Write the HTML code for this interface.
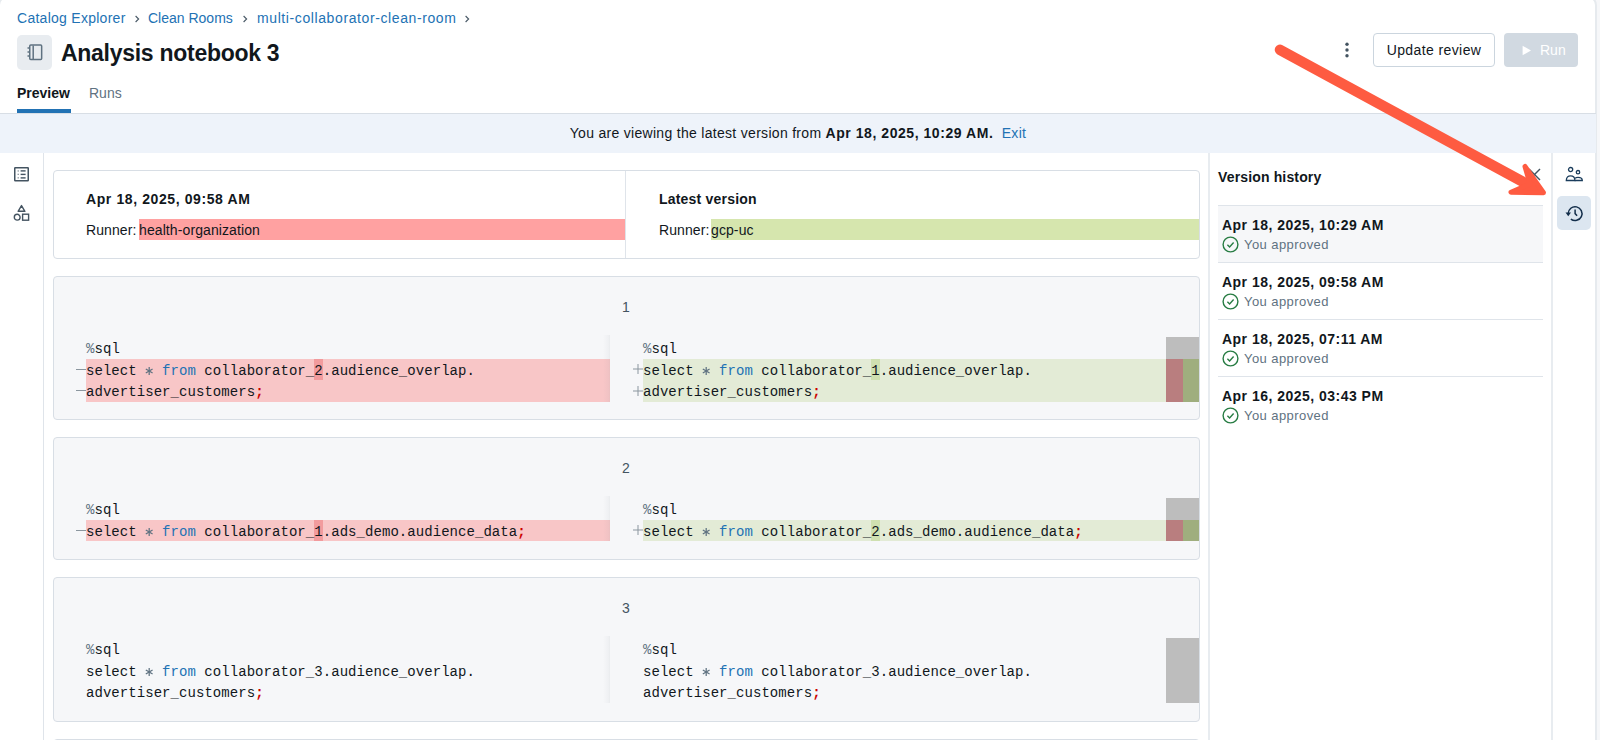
<!DOCTYPE html>
<html><head><meta charset="utf-8">
<style>
*{box-sizing:border-box;margin:0;padding:0}
html,body{width:1600px;height:740px;overflow:hidden;background:#f6f7f9}
body{position:relative;font-family:"Liberation Sans",sans-serif;color:#11171c;font-size:14px}
.abs{position:absolute}
.mono{font-family:"Liberation Mono",monospace}
/* outer right strip */
#rstrip{left:-2px;top:-4px;width:1599px;height:760px;background:#fff;border:2px solid #e6eaee;border-radius:9px}
/* breadcrumb */
.bc{top:10px;height:16px;line-height:16px;color:#2272b4;font-size:14px;white-space:nowrap}
.chev{top:15px;width:8px;height:8px}
#title{left:61px;top:39px;font-size:23px;font-weight:bold;line-height:28px;white-space:nowrap;letter-spacing:-0.28px}
#nbicon{left:17px;top:35px;width:34.5px;height:34.5px;background:#e8ecf0;border-radius:5px}
.tab{top:85px;font-size:14px;line-height:16px}
#tabline{left:17px;top:109px;width:54px;height:4px;background:#2272b4}
#hline{left:0;top:113px;width:1596px;height:1px;background:#d8dee5}
#banner{left:0;top:114px;width:1596px;height:39px;background:#eef3fa}
#bannertxt{left:0;top:125px;width:1596px;text-align:center;line-height:16px;font-size:14px;letter-spacing:0.3px}
#bannertxt b{letter-spacing:0.55px}
#leftbar{left:43px;top:153px;width:1px;height:587px;background:#dfe4ea}
#mainr{left:1208px;top:153px;width:2px;height:587px;background:#e8ecf0}
#panelr{left:1551px;top:153px;width:2px;height:587px;background:#e8ecf0}
.btn{top:33px;height:34px;border-radius:4px;line-height:33px;font-size:14px;white-space:nowrap}
#upd{left:1373px;width:122px;border:1px solid #cbd5de;text-align:center;color:#11171c;letter-spacing:0.4px}
#run{left:1504px;width:74px;background:#d1d9e1;color:#fff}
/* diff header */
#hdr{left:53px;top:170px;width:1147px;height:89px;border:1px solid #d8dee5;border-radius:4px;background:#fff}
#hdrdiv{left:625px;top:171px;width:1px;height:87px;background:#dfe4ea}
.hdate{font-weight:bold;font-size:14px;line-height:16px;white-space:nowrap;letter-spacing:0.6px}
.runner{font-size:14px;line-height:21px;height:21px;padding-top:1px;white-space:nowrap;letter-spacing:0.1px}
.cell{left:53px;width:1147px;border:1px solid #d8dee5;border-radius:4px;background:#f6f7f9}
.num{font-size:14px;color:#445461;line-height:16px}
.code{font-family:"Liberation Mono",monospace;font-size:14px;line-height:21.5px;white-space:pre;color:#11171c;padding-top:2px;letter-spacing:0.055px}
.ast{display:inline-block;vertical-align:-1px}
.kw{color:#2272b4}
.pct{color:#5f7281}
.semi{color:#cc0000;font-weight:bold}
.delbg{background:#f8c6c7}
.addbg{background:#e3ebd6}
.delch{background:#f29b9d}
.addch{background:#cfe0b0}
.gut{color:#8b969f}
.mm-g{background:#bdbdbd}
.mm-r{background:#b97e7f}
.mm-a{background:#9fae7e}
/* version history */
#vhtitle{left:1218px;top:169px;font-weight:bold;font-size:14px;line-height:16px;letter-spacing:0.15px}
.vitem{left:1218px;width:325px;height:57px;border-bottom:1px solid #dfe4ea}
.vdate{left:4px;top:11px;font-weight:bold;font-size:14px;line-height:16px;white-space:nowrap;letter-spacing:0.48px}
.vsub{left:26px;top:31px;color:#5f7281;font-size:13px;line-height:16px;white-space:nowrap;letter-spacing:0.43px}
.vchk{left:4px;top:30px;width:17px;height:17px}
#hist{left:1557px;top:196px;width:34px;height:34px;background:#dce6f0;border-radius:5px}
</style></head><body>
<div id="rstrip" class="abs"></div>

<!-- breadcrumb -->
<div class="abs bc" style="left:17px;letter-spacing:0.27px">Catalog Explorer</div>
<svg class="abs chev" style="left:133px" viewBox="0 0 8 8"><path d="M2.6 1 L5.6 4 L2.6 7" fill="none" stroke="#4a5a67" stroke-width="1.15"/></svg>
<div class="abs bc" style="left:148px">Clean Rooms</div>
<svg class="abs chev" style="left:241px" viewBox="0 0 8 8"><path d="M2.6 1 L5.6 4 L2.6 7" fill="none" stroke="#4a5a67" stroke-width="1.15"/></svg>
<div class="abs bc" style="left:257px;letter-spacing:0.6px">multi-collaborator-clean-room</div>
<svg class="abs chev" style="left:463px" viewBox="0 0 8 8"><path d="M2.6 1 L5.6 4 L2.6 7" fill="none" stroke="#4a5a67" stroke-width="1.15"/></svg>

<!-- title -->
<div id="nbicon" class="abs">
<svg class="abs" style="left:0;top:0" width="35" height="35" viewBox="0 0 35 35">
<g fill="none" stroke="#5f7281" stroke-width="1.5">
<rect x="29.5" y="10" width="0" height="0"/>
<rect x="12.75" y="10.1" width="11.9" height="14.3" rx="1"/>
<line x1="16.2" y1="10.4" x2="16.2" y2="24.2"/>
<line x1="10.5" y1="13" x2="12.75" y2="13"/>
<line x1="10.5" y1="17" x2="12.75" y2="17"/>
<line x1="10.5" y1="21" x2="12.75" y2="21"/>
</g></svg>
</div>
<div id="title" class="abs">Analysis notebook 3</div>

<!-- kebab & buttons -->
<svg class="abs" style="left:1343px;top:40.8px" width="8" height="18" viewBox="0 0 8 18"><g fill="#445461"><circle cx="4" cy="3.3" r="1.7"/><circle cx="4" cy="9" r="1.7"/><circle cx="4" cy="14.7" r="1.7"/></g></svg>
<div id="upd" class="abs btn">Update review</div>
<div id="run" class="abs btn">
<svg class="abs" style="left:18px;top:12px" width="10" height="11" viewBox="0 0 10 11"><path d="M0.6 0.8 L9 5.5 L0.6 10.2Z" fill="#fff"/></svg>
<span class="abs" style="left:36px;top:1px">Run</span>
</div>

<!-- tabs -->
<div class="abs tab" style="left:17px;font-weight:bold">Preview</div>
<div class="abs tab" style="left:89px;color:#5f7281">Runs</div>
<div id="tabline" class="abs"></div>
<div id="hline" class="abs"></div>

<!-- banner -->
<div id="banner" class="abs"></div>
<div id="bannertxt" class="abs">You are viewing the latest version from <b>Apr 18, 2025, 10:29 AM.</b>&nbsp; <span style="color:#2272b4">Exit</span></div>

<!-- sidebars -->
<div id="leftbar" class="abs"></div>
<div id="mainr" class="abs"></div>
<div id="panelr" class="abs"></div>

<!-- left icons -->
<svg class="abs" style="left:13px;top:166px" width="17" height="17" viewBox="0 0 17 17">
<g fill="none" stroke="#445461" stroke-width="1.5"><rect x="1.75" y="1.75" width="13.5" height="13" rx="0.5"/></g>
<g fill="#445461"><rect x="4.6" y="4.3" width="1.2" height="1.3" opacity="0.7"/><rect x="4.6" y="7.7" width="1.2" height="1.3" opacity="0.7"/><rect x="4.6" y="11.2" width="1.2" height="1.3" opacity="0.7"/>
<rect x="7.6" y="4.2" width="5" height="1.4"/><rect x="7.6" y="7.7" width="5" height="1.4"/><rect x="7.6" y="11.2" width="5" height="1.4"/></g>
</svg>
<svg class="abs" style="left:13px;top:204px" width="17" height="18" viewBox="0 0 17 18">
<g fill="none" stroke="#445461" stroke-width="1.4">
<path d="M8.5 1.6 L11.9 7.3 L5.1 7.3 Z" stroke-linejoin="round"/>
<circle cx="4.2" cy="13.2" r="2.9"/>
<rect x="9.6" y="10.2" width="6" height="6"/>
</g></svg>

<!-- right icons -->
<svg class="abs" style="left:1564px;top:165px" width="20" height="18" viewBox="0 0 20 18">
<g fill="none" stroke="#1b3d5c" stroke-width="1.3">
<circle cx="6.6" cy="4.6" r="2.1"/>
<circle cx="14" cy="7.2" r="1.7"/>
<path d="M2.3 15.5 C2.3 12.4 4.2 10.8 6.6 10.8 C9 10.8 10.9 12.4 10.9 15.5 Z"/>
<path d="M10.6 15.5 L18.3 15.5 C18.3 13.6 17 12.4 14 12.4 C12.6 12.4 11.6 12.8 11 13.4"/>
</g></svg>
<div id="hist" class="abs">
<svg class="abs" style="left:7px;top:7px" width="20" height="20" viewBox="0 0 20 20">
<g fill="none" stroke="#132e4a" stroke-width="1.5">
<path d="M4.20 10.60 A6.9 6.9 0 1 1 6.85 16.04"/>
<path d="M11.1 6.4 L11.1 10.6 L13.1 12.7"/>
</g>
<path d="M1.5 9.6 L7 9.6 L4.25 13.2 Z" fill="#132e4a"/>
</svg>
</div>

<!-- diff header -->
<div id="hdr" class="abs"></div>
<div id="hdrdiv" class="abs"></div>
<div class="abs hdate" style="left:86px;top:191px">Apr 18, 2025, 09:58 AM</div>
<div class="abs runner" style="left:86px;top:219px">Runner:</div>
<div class="abs runner" style="left:139px;top:219px;width:486px;background:#ffa1a1;padding-left:0">health-organization</div>
<div class="abs hdate" style="left:659px;top:191px;letter-spacing:0.2px">Latest version</div>
<div class="abs runner" style="left:659px;top:219px">Runner:</div>
<div class="abs runner" style="left:711px;top:219px;width:488px;background:#d6e6ae">gcp-uc</div>

<!-- CELLS_PLACEHOLDER -->
<div class="abs cell" style="top:276px;height:144px"></div>
<div class="abs num" style="left:622px;top:299px">1</div>
<div class="abs mm-g" style="left:1166px;top:337.0px;width:33px;height:21.5px"></div>
<div class="abs code" style="left:86px;top:337.0px"><span class="pct">%</span>sql</div>
<div class="abs code" style="left:643px;top:337.0px"><span class="pct">%</span>sql</div>
<div class="abs delbg" style="left:86px;top:358.5px;width:524px;height:21.5px"></div>
<div class="abs addbg" style="left:643px;top:358.5px;width:523px;height:21.5px"></div>
<div class="abs" style="left:76px;top:368.5px;width:10px;height:1px;background:#8b969f"></div>
<svg class="abs" style="left:633px;top:364.0px" width="10" height="10" viewBox="0 0 10 10"><g stroke="#8b969f" stroke-width="1"><line x1="0" y1="5" x2="10" y2="5"/><line x1="5" y1="0" x2="5" y2="10"/></g></svg>
<div class="abs mm-r" style="left:1166px;top:358.5px;width:17px;height:21.5px"></div>
<div class="abs mm-a" style="left:1183px;top:358.5px;width:16px;height:21.5px"></div>
<div class="abs delch" style="left:314.28px;top:358.5px;width:8.46px;height:21.5px"></div>
<div class="abs addch" style="left:871.28px;top:358.5px;width:8.46px;height:21.5px"></div>
<div class="abs code" style="left:86px;top:358.5px">select <svg class="ast" width="8.4" height="10" viewBox="0 0 8.4 10"><g stroke="#5f7281" stroke-width="1.25"><line x1="4.2" y1="1.1" x2="4.2" y2="8.9"/><line x1="0.82" y1="3.05" x2="7.58" y2="6.95"/><line x1="0.82" y1="6.95" x2="7.58" y2="3.05"/></g></svg> <span class="kw">from</span> collaborator_2.audience_overlap.</div>
<div class="abs code" style="left:643px;top:358.5px">select <svg class="ast" width="8.4" height="10" viewBox="0 0 8.4 10"><g stroke="#5f7281" stroke-width="1.25"><line x1="4.2" y1="1.1" x2="4.2" y2="8.9"/><line x1="0.82" y1="3.05" x2="7.58" y2="6.95"/><line x1="0.82" y1="6.95" x2="7.58" y2="3.05"/></g></svg> <span class="kw">from</span> collaborator_1.audience_overlap.</div>
<div class="abs delbg" style="left:86px;top:380.0px;width:524px;height:21.5px"></div>
<div class="abs addbg" style="left:643px;top:380.0px;width:523px;height:21.5px"></div>
<div class="abs" style="left:76px;top:390.0px;width:10px;height:1px;background:#8b969f"></div>
<svg class="abs" style="left:633px;top:385.5px" width="10" height="10" viewBox="0 0 10 10"><g stroke="#8b969f" stroke-width="1"><line x1="0" y1="5" x2="10" y2="5"/><line x1="5" y1="0" x2="5" y2="10"/></g></svg>
<div class="abs mm-r" style="left:1166px;top:380.0px;width:17px;height:21.5px"></div>
<div class="abs mm-a" style="left:1183px;top:380.0px;width:16px;height:21.5px"></div>
<div class="abs code" style="left:86px;top:380.0px">advertiser_customers<span class="semi">;</span></div>
<div class="abs code" style="left:643px;top:380.0px">advertiser_customers<span class="semi">;</span></div>
<div class="abs cell" style="top:437px;height:123px"></div>
<div class="abs num" style="left:622px;top:460px">2</div>
<div class="abs mm-g" style="left:1166px;top:498.0px;width:33px;height:21.5px"></div>
<div class="abs code" style="left:86px;top:498.0px"><span class="pct">%</span>sql</div>
<div class="abs code" style="left:643px;top:498.0px"><span class="pct">%</span>sql</div>
<div class="abs delbg" style="left:86px;top:519.5px;width:524px;height:21.5px"></div>
<div class="abs addbg" style="left:643px;top:519.5px;width:523px;height:21.5px"></div>
<div class="abs" style="left:76px;top:529.5px;width:10px;height:1px;background:#8b969f"></div>
<svg class="abs" style="left:633px;top:525.0px" width="10" height="10" viewBox="0 0 10 10"><g stroke="#8b969f" stroke-width="1"><line x1="0" y1="5" x2="10" y2="5"/><line x1="5" y1="0" x2="5" y2="10"/></g></svg>
<div class="abs mm-r" style="left:1166px;top:519.5px;width:17px;height:21.5px"></div>
<div class="abs mm-a" style="left:1183px;top:519.5px;width:16px;height:21.5px"></div>
<div class="abs delch" style="left:314.28px;top:519.5px;width:8.46px;height:21.5px"></div>
<div class="abs addch" style="left:871.28px;top:519.5px;width:8.46px;height:21.5px"></div>
<div class="abs code" style="left:86px;top:519.5px">select <svg class="ast" width="8.4" height="10" viewBox="0 0 8.4 10"><g stroke="#5f7281" stroke-width="1.25"><line x1="4.2" y1="1.1" x2="4.2" y2="8.9"/><line x1="0.82" y1="3.05" x2="7.58" y2="6.95"/><line x1="0.82" y1="6.95" x2="7.58" y2="3.05"/></g></svg> <span class="kw">from</span> collaborator_1.ads_demo.audience_data<span class="semi">;</span></div>
<div class="abs code" style="left:643px;top:519.5px">select <svg class="ast" width="8.4" height="10" viewBox="0 0 8.4 10"><g stroke="#5f7281" stroke-width="1.25"><line x1="4.2" y1="1.1" x2="4.2" y2="8.9"/><line x1="0.82" y1="3.05" x2="7.58" y2="6.95"/><line x1="0.82" y1="6.95" x2="7.58" y2="3.05"/></g></svg> <span class="kw">from</span> collaborator_2.ads_demo.audience_data<span class="semi">;</span></div>
<div class="abs cell" style="top:577px;height:145px"></div>
<div class="abs num" style="left:622px;top:600px">3</div>
<div class="abs code" style="left:86px;top:638.0px"><span class="pct">%</span>sql</div>
<div class="abs code" style="left:643px;top:638.0px"><span class="pct">%</span>sql</div>
<div class="abs code" style="left:86px;top:659.5px">select <svg class="ast" width="8.4" height="10" viewBox="0 0 8.4 10"><g stroke="#5f7281" stroke-width="1.25"><line x1="4.2" y1="1.1" x2="4.2" y2="8.9"/><line x1="0.82" y1="3.05" x2="7.58" y2="6.95"/><line x1="0.82" y1="6.95" x2="7.58" y2="3.05"/></g></svg> <span class="kw">from</span> collaborator_3.audience_overlap.</div>
<div class="abs code" style="left:643px;top:659.5px">select <svg class="ast" width="8.4" height="10" viewBox="0 0 8.4 10"><g stroke="#5f7281" stroke-width="1.25"><line x1="4.2" y1="1.1" x2="4.2" y2="8.9"/><line x1="0.82" y1="3.05" x2="7.58" y2="6.95"/><line x1="0.82" y1="6.95" x2="7.58" y2="3.05"/></g></svg> <span class="kw">from</span> collaborator_3.audience_overlap.</div>
<div class="abs code" style="left:86px;top:681.0px">advertiser_customers<span class="semi">;</span></div>
<div class="abs code" style="left:643px;top:681.0px">advertiser_customers<span class="semi">;</span></div>
<div class="abs mm-g" style="left:1166px;top:638px;width:33px;height:64.5px"></div>
<div class="abs cell" style="top:739px;height:200px"></div>
<div class="abs" style="left:603px;top:335px;width:7px;height:66.5px;background:linear-gradient(90deg,rgba(120,130,140,0) 0%,rgba(120,130,140,0.06) 80%,rgba(120,130,140,0.10) 100%)"></div>
<div class="abs" style="left:603px;top:496px;width:7px;height:45.0px;background:linear-gradient(90deg,rgba(120,130,140,0) 0%,rgba(120,130,140,0.06) 80%,rgba(120,130,140,0.10) 100%)"></div>
<div class="abs" style="left:603px;top:636px;width:7px;height:66.5px;background:linear-gradient(90deg,rgba(120,130,140,0) 0%,rgba(120,130,140,0.06) 80%,rgba(120,130,140,0.10) 100%)"></div>
<!-- /CELLS -->

<!-- version history -->
<div id="vhtitle" class="abs">Version history</div>
<svg class="abs" style="left:1528px;top:168px" width="13" height="13" viewBox="0 0 13 13"><g stroke="#445461" stroke-width="1.4"><line x1="1" y1="1" x2="12" y2="12"/><line x1="12" y1="1" x2="1" y2="12"/></g></svg>
<div class="abs" style="left:1218px;top:205px;width:325px;height:1px;background:#dfe4ea"></div>
<!-- VH_PLACEHOLDER -->
<div class="abs vitem" style="top:206px;background:#f6f7f9;">
<div class="abs vdate">Apr 18, 2025, 10:29 AM</div>
<svg class="abs vchk" viewBox="0 0 17 17"><circle cx="8.5" cy="8.5" r="7.4" fill="none" stroke="#277c43" stroke-width="1.4"/><path d="M5.4 8.8 L7.6 10.9 L11.6 6.6" fill="none" stroke="#277c43" stroke-width="1.4"/></svg>
<div class="abs vsub">You approved</div>
</div>
<div class="abs vitem" style="top:263px;">
<div class="abs vdate">Apr 18, 2025, 09:58 AM</div>
<svg class="abs vchk" viewBox="0 0 17 17"><circle cx="8.5" cy="8.5" r="7.4" fill="none" stroke="#277c43" stroke-width="1.4"/><path d="M5.4 8.8 L7.6 10.9 L11.6 6.6" fill="none" stroke="#277c43" stroke-width="1.4"/></svg>
<div class="abs vsub">You approved</div>
</div>
<div class="abs vitem" style="top:320px;">
<div class="abs vdate">Apr 18, 2025, 07:11 AM</div>
<svg class="abs vchk" viewBox="0 0 17 17"><circle cx="8.5" cy="8.5" r="7.4" fill="none" stroke="#277c43" stroke-width="1.4"/><path d="M5.4 8.8 L7.6 10.9 L11.6 6.6" fill="none" stroke="#277c43" stroke-width="1.4"/></svg>
<div class="abs vsub">You approved</div>
</div>
<div class="abs vitem" style="top:377px;border-bottom:none;">
<div class="abs vdate">Apr 16, 2025, 03:43 PM</div>
<svg class="abs vchk" viewBox="0 0 17 17"><circle cx="8.5" cy="8.5" r="7.4" fill="none" stroke="#277c43" stroke-width="1.4"/><path d="M5.4 8.8 L7.6 10.9 L11.6 6.6" fill="none" stroke="#277c43" stroke-width="1.4"/></svg>
<div class="abs vsub">You approved</div>
</div>
<!-- /VH -->

<!-- arrow -->
<svg class="abs" style="left:0;top:0" width="1600" height="740" viewBox="0 0 1600 740">
<g fill="#fe5b41" stroke="#fe5b41" stroke-linecap="round" stroke-linejoin="round">
<line x1="1280" y1="49.8" x2="1528" y2="184.6" stroke-width="10.5"/>
<path d="M1543.5 192.8 L1525 166.5 L1530 184 L1511 192.3 Z" stroke-width="5"/>
</g></svg>
</body></html>
